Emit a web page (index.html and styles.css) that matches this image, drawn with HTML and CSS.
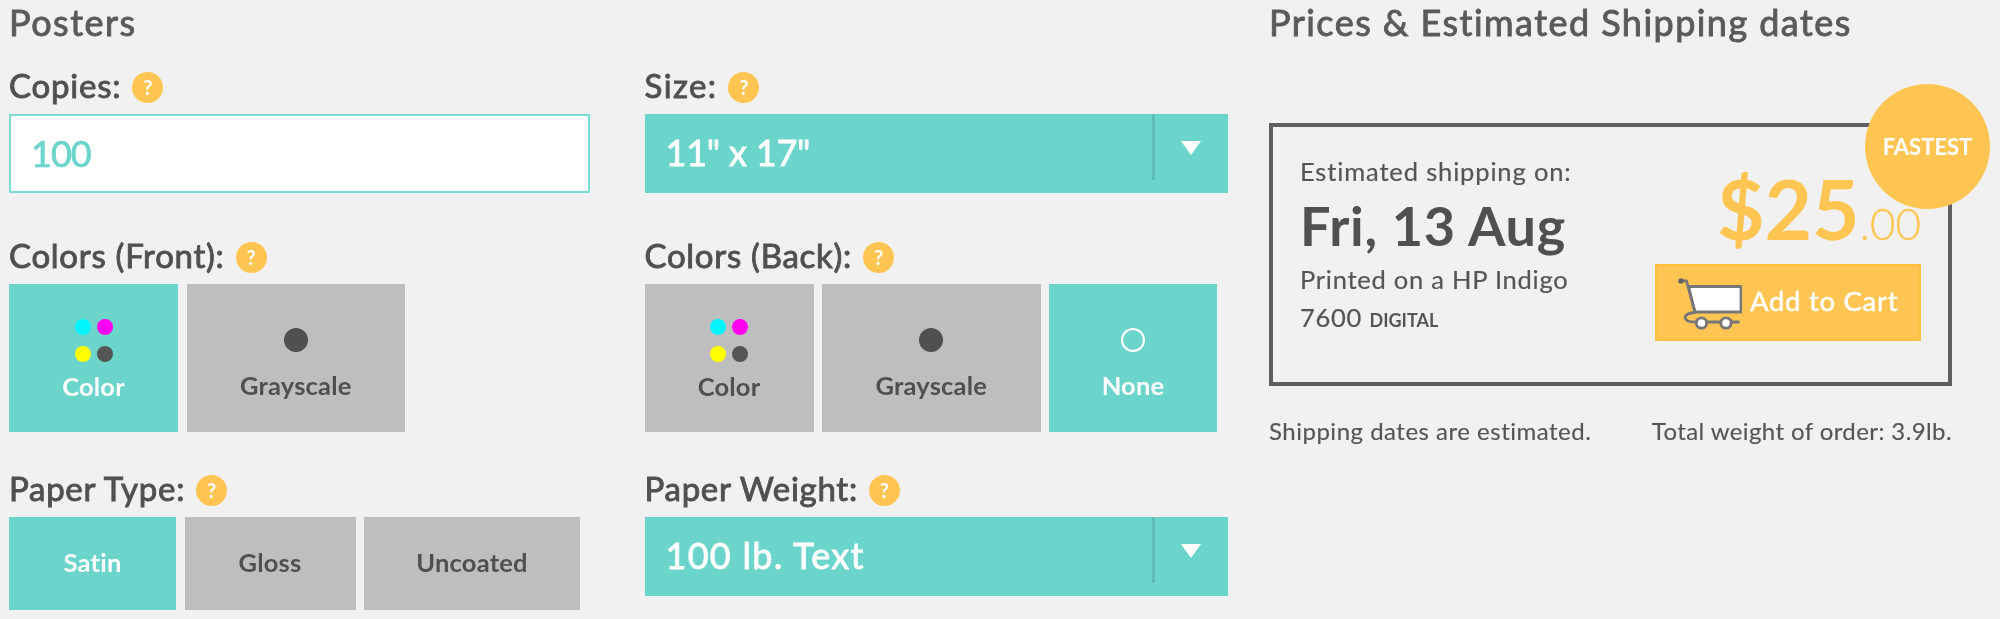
FILE: index.html
```html
<!DOCTYPE html>
<html lang="en">
<head>
<meta charset="utf-8">
<title>Posters</title>
<link rel="stylesheet" href="styles.css">
</head>
<body>
<main class="page">
  <section class="form">
    <h1 class="title">Posters</h1>
    <div class="grid">
      <div class="field field-a">
        <div class="label"><span class="label-text ls-copies">Copies:</span><span class="help">?</span></div>
        <div class="input">100</div>
      </div>
      <div class="field field-a">
        <div class="label"><span class="label-text ls-size">Size:</span><span class="help">?</span></div>
        <div class="select"><span class="select-text st-size">11" x 17"</span><span class="sep"></span><span class="arrow"></span></div>
      </div>
      <div class="field field-b">
        <div class="label"><span class="label-text">Colors (Front):</span><span class="help">?</span></div>
        <div class="tiles">
          <div class="tile tile-s on"><div class="dots"><i class="dot c"></i><i class="dot m"></i><i class="dot y"></i><i class="dot k"></i></div><span>Color</span></div>
          <div class="tile tile-l"><i class="big"></i><span>Grayscale</span></div>
        </div>
      </div>
      <div class="field field-b">
        <div class="label"><span class="label-text">Colors (Back):</span><span class="help">?</span></div>
        <div class="tiles">
          <div class="tile tile-s"><div class="dots"><i class="dot c"></i><i class="dot m"></i><i class="dot y"></i><i class="dot k"></i></div><span>Color</span></div>
          <div class="tile tile-l"><i class="big"></i><span>Grayscale</span></div>
          <div class="tile tile-n on"><i class="big ring"></i><span>None</span></div>
        </div>
      </div>
      <div class="field">
        <div class="label"><span class="label-text">Paper Type:</span><span class="help">?</span></div>
        <div class="tiles">
          <div class="tile flat t1 on"><span>Satin</span></div>
          <div class="tile flat t2"><span>Gloss</span></div>
          <div class="tile flat t3"><span>Uncoated</span></div>
        </div>
      </div>
      <div class="field">
        <div class="label"><span class="label-text">Paper Weight:</span><span class="help">?</span></div>
        <div class="select"><span class="select-text st-weight">100 lb. Text</span><span class="sep"></span><span class="arrow"></span></div>
      </div>
    </div>
  </section>
  <section class="prices">
    <h2 class="title title-r">Prices &amp; Estimated Shipping dates</h2>
    <div class="box">
      <div class="badge">FASTEST</div>
      <div class="info">
        <p class="est">Estimated shipping on:</p>
        <p class="date">Fri, 13 Aug</p>
        <p class="press">Printed on a HP Indigo<br>7600 <small>DIGITAL</small></p>
      </div>
      <div class="buy">
        <div class="price"><span class="dollars">$25</span><span class="cents">.00</span></div>
        <div class="cart-btn">
          <svg class="cart" viewBox="0 0 64 53" width="64" height="53" aria-hidden="true">
            <path d="M10.500 8.500H63V34H17Z" fill="#fff" stroke="#777" stroke-width="2.800" stroke-linejoin="round"/>
            <path d="M2.500 2.800H8.500L17 34.500C9 35 5.500 38 8 41.500C9.500 43.500 12 44 16 44H60.500" fill="none" stroke="#777" stroke-width="2.800" stroke-linecap="round" stroke-linejoin="round"/>
            <circle cx="3" cy="3" r="2.800" fill="#666"/>
            <circle cx="23.500" cy="45" r="5.200" fill="#fff" stroke="#777" stroke-width="2.800"/>
            <circle cx="48" cy="45" r="5.200" fill="#fff" stroke="#777" stroke-width="2.800"/>
          </svg>
          <span class="cart-text">Add to Cart</span>
        </div>
      </div>
    </div>
    <div class="notes"><span>Shipping dates are estimated.</span><span class="note-r">Total weight of order: 3.9lb.</span></div>
  </section>
</main>
</body>
</html>
```
FILE: styles.css
```css
* { box-sizing: border-box; }
html, body { margin: 0; height: 100%; }
body {
  background: #f1f1f1;
  color: #555;
  font-family: Lato, "Open Sans", sans-serif;
  overflow: hidden;
}
.page { display: flex; padding-left: 9px; filter: blur(0.35px); }
.form { width: 1219px; }
.prices { width: 684px; margin-left: 41px; }
.title {
  margin: 0;
  height: 67px;
  font-size: 36px;
  line-height: 44px;
  font-weight: 400;
  -webkit-text-stroke: 0.9px #5a5a5a;
  color: #5a5a5a;
  letter-spacing: 1.5px;
}
.title-r { height: 123px; letter-spacing: 1.45px; }

.grid { display: grid; grid-template-columns: 581px 583.500px; column-gap: 54.500px; }
.field-a { margin-bottom: 44px; }
.field-b { margin-bottom: 38px; }
.label { display: flex; align-items: center; gap: 11px; height: 47px; padding-bottom: 10px; }
.label-text {
  font-size: 33px;
  line-height: 37px;
  font-weight: 400;
  -webkit-text-stroke: 0.9px #505050;
  color: #505050;
  letter-spacing: 0.72px;
}
.ls-copies { letter-spacing: 0.8px; }
.ls-size { letter-spacing: 1.4px; }
.help {
  flex: none;
  width: 31px;
  height: 31px;
  margin-top: 4px;
  border-radius: 50%;
  background: #ffc552;
  color: #fff;
  font-size: 20px;
  line-height: 31px;
  font-weight: 700;
  text-align: center;
}
.input {
  height: 79px;
  border: 2px solid #7bdcd3;
  background: #fff;
  color: #6bd4cb;
  -webkit-text-stroke: 0.7px #6bd4cb;
  padding-left: 20px;
  font-size: 36px;
  line-height: 74px;
  letter-spacing: -1px;
}
.select {
  display: flex;
  height: 79px;
  background: #6bd4cb;
  color: #fff;
}
.select-text {
  width: 507px;
  padding-left: 21px;
  font-size: 36px;
  line-height: 76px;
  -webkit-text-stroke: 0.8px #fff;
}
.st-size { letter-spacing: -0.2px; }
.st-weight { letter-spacing: 1.3px; }
.sep { flex: none; width: 3px; height: 66px; background: #5fbeb6; }
.arrow {
  flex: none;
  align-self: flex-start;
  margin: 27px 0 0 26px;
  width: 0;
  height: 0;
  border-left: 10.500px solid transparent;
  border-right: 10.500px solid transparent;
  border-top: 14px solid #fff;
}
.tiles { display: flex; gap: 8.500px; }
.tile {
  height: 148px;
  background: #bebebe;
  color: #505050;
  display: flex;
  flex-direction: column;
  align-items: center;
  font-size: 25.500px;
  line-height: 30px;
  font-weight: 700;
  letter-spacing: 0.2px;
}
.tile.on { background: #6bd4cb; color: #fff; }
.tile-s { width: 169px; padding-top: 35px; }
.tile-l { width: 218.500px; padding-top: 44px; }
.tile-n { width: 168px; padding-top: 44px; }
.tile-s span { margin-top: 9px; }
.tile-l span, .tile-n span { margin-top: 18px; }
.flat { height: 93px; justify-content: center; padding-bottom: 3px; }
.t1 { width: 167px; }
.t2 { width: 171px; }
.t3 { width: 216px; }
.dots { display: grid; grid-template-columns: 16px 16px; gap: 11px 6px; }
.dot { display: block; width: 16px; height: 16px; border-radius: 50%; }
.c { background: #00f5ff; }
.m { background: #ff00f0; }
.y { background: #ffff00; }
.k { background: #555; }
.big { display: block; width: 24px; height: 24px; border-radius: 50%; background: #505050; }
.ring { background: transparent; border: 2px solid #fff; }

.box {
  position: relative;
  display: flex;
  justify-content: space-between;
  width: 683px;
  height: 263px;
  border: 4px solid #5f5f5f;
  padding: 28px 27px 0 27px;
}
.badge {
  position: absolute;
  top: -43px;
  right: -42px;
  z-index: 1;
  width: 125px;
  height: 125px;
  border-radius: 50%;
  background: #ffc552;
  color: #fff;
  font-size: 22px;
  font-weight: 700;
  line-height: 125px;
  text-align: center;
}
.info p { margin: 0; }
.est { font-size: 25.500px; line-height: 32px; color: #555; letter-spacing: 0.85px; -webkit-text-stroke: 0.2px #555; }
.date { margin-top: 5px !important; font-size: 54px; line-height: 68px; font-weight: 700; color: #505050; letter-spacing: 0.75px; }
.press { font-size: 25.500px; line-height: 38px; letter-spacing: 0.75px; -webkit-text-stroke: 0.2px #555; }
.press small { font-size: 18px; font-weight: 700; letter-spacing: 0; -webkit-text-stroke: 0; }
.buy { display: flex; flex-direction: column; align-items: flex-end; margin-top: 5px; }
.price { color: #ffc552; height: 104px; line-height: 96px; white-space: nowrap; }
.dollars { font-size: 82px; font-weight: 700; }
.cents { font-size: 44px; font-weight: 300; -webkit-text-stroke: 0.3px #ffc552; }
.cart-btn {
  display: flex;
  align-items: center;
  gap: 8px;
  width: 266px;
  height: 77px;
  padding: 0 0 0 21px;
  border: 2px solid #ffbe3c;
  background: #ffc552;
  color: #fff;
}
.cart { flex: none; margin-top: 4px; }
.cart-text {
  margin-top: -5px;
  font-size: 27.500px;
  -webkit-text-stroke: 0.5px #fff;
  letter-spacing: 0.7px;
}
.notes {
  display: flex;
  justify-content: space-between;
  width: 683px;
  padding-top: 29px;
  font-size: 24px;
  line-height: 32px;
  letter-spacing: 0.5px;
  -webkit-text-stroke: 0.15px #555;
}
.note-r { letter-spacing: 0.4px; }
```
